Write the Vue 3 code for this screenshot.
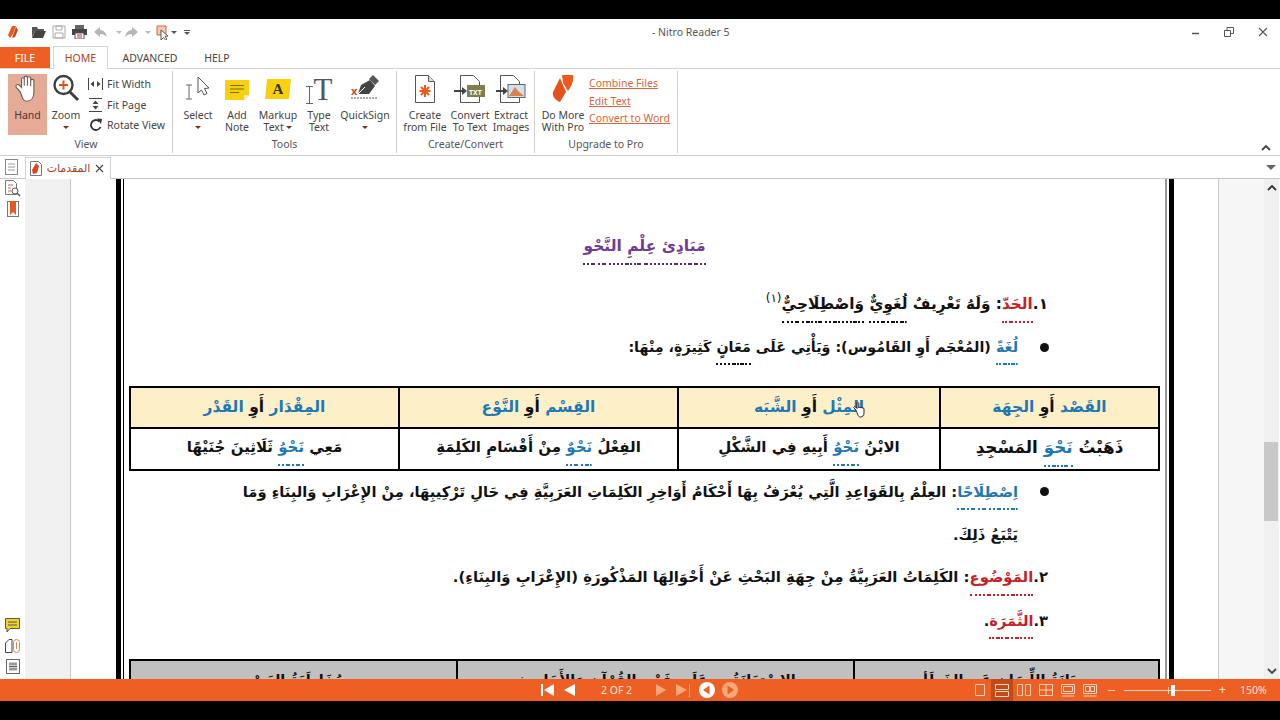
<script setup>
// splits arabic text so the harakat can get their own colour, like in the scanned pdf
const marks = /[\u064B-\u0652]+|[^\u064B-\u0652]+/g
const parts = (...runs) => {
  const out = []
  for (const r of runs) {
    const [text, cls = ''] = Array.isArray(r) ? r : [r]
    for (const t of text.match(marks)) {
      const isMark = /^[\u064B-\u0652]/.test(t)
      out.push({ t, c: cls + (isMark ? ' mk' : '') })
    }
  }
  return out
}

const title = parts(['مَبَادِئ عِلْمِ النَّحْو', 'purple u-purple'])
const line1 = parts('١.', ['الحَدّ', 'red u-red'], ': وَلَهُ تَعْرِيفٌ ', ['لُغَوِيٌّ', 'u-black'], ' ', ['وَاصْطِلَاحِيٌّ', 'u-black'])
const line2 = parts(['لُغَةً', 'blue u-blue'], ' (المُعْجَم أَوِ القَامُوس): وَيَأْتِي عَلَى ', ['مَعَانٍ', 'u-black'], ' كَثِيرَةٍ، مِنْهَا:')
const line3 = parts(['اِصْطِلَاحًا', 'blue u-blue'], ': العِلْمُ بِالقَوَاعِدِ الَّتِي يُعْرَفُ بِهَا أَحْكَامُ أَوَاخِرِ الكَلِمَاتِ العَرَبِيَّةِ فِي حَالِ تَرْكِيبِهَا، مِنْ الإِعْرَابِ وَالبِنَاءِ وَمَا')
const line4 = parts('يَتْبَعُ ذَلِكَ.')
const line5 = parts('٢.', ['المَوْضُوع', 'red u-red'], ': الكَلِمَاتُ العَرَبِيَّةُ مِنْ جِهَةِ البَحْثِ عَنْ أَحْوَالِهَا المَذْكُورَةِ (الإِعْرَابِ وَالبِنَاءِ).')
const line6 = parts('٣.', ['الثَّمَرَة', 'red u-red'], '.')

const heads = [
  parts(['القَصْد', 'blue'], ' أَوِ ', ['الجِهَة', 'blue']),
  parts(['المِثْل', 'blue'], ' أَوِ ', ['الشَّبَه', 'blue']),
  parts(['القِسْم', 'blue'], ' أَوِ ', ['النَّوْع', 'blue']),
  parts(['المِقْدَار', 'blue'], ' أَوِ ', ['القَدْر', 'blue']),
]
const cells = [
  parts('ذَهَبْتُ ', ['نَحْوَ', 'blue u-blue'], ' المَسْجِدِ'),
  parts('الابْنُ ', ['نَحْوُ', 'blue u-blue'], ' أَبِيهِ فِي الشَّكْلِ'),
  parts('الفِعْلُ ', ['نَحْوٌ', 'blue u-blue'], ' مِنْ أَقْسَامِ الكَلِمَةِ'),
  parts('مَعِي ', ['نَحْوُ', 'blue u-blue'], ' ثَلَاثِينَ جُنَيْهًا'),
]
const lower = [
  parts('صِيَانَةُ اللِّسَانِ عَنِ الخَطَأِ'),
  parts('الاسْتِعَانَةُ بِهِ عَلَى فَهْمِ القُرْآنِ وَالأَحَادِيثِ'),
  parts('مُخَاطَبَةُ العَصْرِ'),
]
</script>

<template>
  <div class="app">
    <div class="titlebar">
      <div class="qat">
        <svg class="q-logo" width="12" height="14" viewBox="0 0 12 14"><path d="M5 1 L9 1 L6 9 L3 13 L1 10 Z" fill="#e8591f"/><path d="M9 2 L11 5 L8 12 L5 13 Z" fill="#c9431a"/></svg>
        <svg class="q-open" width="16" height="14" viewBox="0 0 16 14"><path d="M1 2h5l1 2h6v2H4L1 12z" fill="#555"/><path d="M4 6h11l-3 7H1z" fill="#444"/></svg>
        <svg class="q-save" width="14" height="14" viewBox="0 0 14 14"><path d="M1 1h12v12H1z" fill="#fff" stroke="#aaa"/><path d="M4 1h6v4H4zM3 8h8v5H3z" fill="none" stroke="#aaa"/></svg>
        <svg class="q-print" width="15" height="14" viewBox="0 0 15 14"><path d="M3 0h9v4H3z" fill="#666"/><path d="M0 4h15v6H0z" fill="#444"/><path d="M3 8h9v6H3z" fill="#fff" stroke="#555"/><path d="M5 10h5M5 12h5" stroke="#c33"/></svg>
        <svg class="q-undo" width="14" height="11" viewBox="0 0 14 11"><path d="M6 0 L0 5 L6 10 V7 C9 7 11 8 13 10 C12 6 10 3 6 3Z" fill="#b5b5b5"/></svg>
        <i class="mini q-d1"></i>
        <svg class="q-redo" width="14" height="11" viewBox="0 0 14 11"><path d="M8 0 L14 5 L8 10 V7 C5 7 3 8 1 10 C2 6 4 3 8 3Z" fill="#b5b5b5"/></svg>
        <i class="mini q-d2"></i>
        <svg class="q-snap" width="13" height="15" viewBox="0 0 13 15"><path d="M1 1h9v9H1z" fill="#f3c9b5" stroke="#d2694a"/><path d="M5 5 V15 L7.5 12.5 L9.5 15 L11 14 L9 11.5 L12 11 Z" fill="#fff" stroke="#333" stroke-width=".8"/></svg>
        <i class="mini dark q-d3"></i>
        <span class="q-more"><b></b><i class="mini dark"></i></span>
      </div>
      <div class="wintitle">- Nitro Reader 5</div>
      <div class="winbtns">
        <svg width="8" height="8" viewBox="0 0 8 8"><path d="M0 5.500h7" stroke="#555" stroke-width="1.500"/></svg>
        <svg width="10" height="10" viewBox="0 0 10 10"><path d="M.5 3.500h6v6h-6zM3 3.500V.5h6.500v6H6.500" fill="none" stroke="#555"/></svg>
        <svg width="10" height="10" viewBox="0 0 10 10"><path d="M1 1l8 8M9 1l-8 8" stroke="#555" stroke-width="1.100"/></svg>
      </div>
    </div>

    <div class="tabs">
      <div class="tab file">FILE</div>
      <div class="tab home">HOME</div>
      <div class="tab adv">ADVANCED</div>
      <div class="tab help">HELP</div>
    </div>

    <div class="ribbon">
      <section class="group g-view">
        <div class="items view-items">
          <div class="rbtn hand">
            <svg width="30" height="30" viewBox="0 0 28 28"><path d="M7 17 L3 12.500 C2 10.500 4 9 6 10.500 L8 12.500 V5 C8 3 10.500 3 10.500 5 V11 V3.500 C10.500 1.500 13.500 1.500 13.500 3.500 V11 V4 C13.500 2 16.500 2 16.500 4 V11.500 V6.500 C16.500 4.500 19.500 4.500 19.500 6.500 V17 C19.500 22 17 25.500 12.500 25.500 C9.500 25.500 8.500 22 7 17Z" fill="#fff" stroke="#6a5a52" stroke-width="1"/></svg>
            <span>Hand</span>
          </div>
          <div class="rbtn zoom">
            <svg width="28" height="30" viewBox="0 0 28 30"><circle cx="11.500" cy="11" r="9" fill="#fff" stroke="#3f3f3f" stroke-width="2.400"/><path d="M18 18l8 8" stroke="#3f3f3f" stroke-width="3"/><path d="M11.500 6.500v9M7 11h9" stroke="#e0521d" stroke-width="2"/></svg>
            <span>Zoom</span>
            <i class="mini red"></i>
          </div>
          <div class="small-list">
            <div class="small">
              <svg width="15" height="12" viewBox="0 0 15 12"><path d="M.5 0v12M14.500 0v12" stroke="#444"/><path d="M6 3 L2.500 6 L6 9zM9 3 L12.500 6 L9 9z" fill="#444"/></svg>
              <span>Fit Width</span>
            </div>
            <div class="small">
              <svg width="15" height="14" viewBox="0 0 15 14"><path d="M1 .5h13M1 13.500h13" stroke="#444"/><path d="M7.500 2.500 L4.500 6h6zM7.500 11.500 L4.500 8h6z" fill="#444"/></svg>
              <span>Fit Page</span>
            </div>
            <div class="small">
              <svg width="15" height="14" viewBox="0 0 15 14"><path d="M11.500 3.500 A5 5 0 1 0 12.500 9" fill="none" stroke="#333" stroke-width="1.800"/><path d="M9 .5 L14 1 L13 6z" fill="#333"/></svg>
              <span>Rotate View</span>
            </div>
          </div>
        </div>
        <div class="gname">View</div>
      </section>

      <section class="group g-tools">
        <div class="items tools-items">
          <div class="rbtn">
            <svg width="28" height="30" viewBox="0 0 28 30"><path d="M2 11h6M5 11v14M2 25h6" stroke="#666" fill="none"/><path d="M14 3 V19 L17.500 16 L20 21 L23 19.500 L20.500 14.500 L25 14 Z" fill="#fff" stroke="#555"/></svg>
            <span>Select</span>
            <i class="mini red"></i>
          </div>
          <div class="rbtn">
            <svg width="26" height="30" viewBox="0 0 26 30"><path d="M1 6h24v15l-5 5H1z" fill="#f9d010"/><path d="M20 26v-5h5z" fill="#f5eeb0"/><path d="M6 11.500h14M6 15h14M6 18.500h9" stroke="#7a6a10" stroke-width="1.200"/></svg>
            <span>Add<br>Note</span>
          </div>
          <div class="rbtn">
            <div class="mark-icon"><b>A</b></div>
            <span class="nw">Markup<br>Text <i class="mini red inl"></i></span>
          </div>
          <div class="rbtn">
            <div class="type-icon"><svg width="7" height="18" viewBox="0 0 7 18"><path d="M0 .5h7M3.500 .5v17M0 17.500h7" stroke="#666" fill="none"/></svg><b>T</b></div>
            <span>Type<br>Text</span>
          </div>
          <div class="rbtn">
            <svg width="30" height="30" viewBox="0 0 30 30"><text x="1" y="21" class="sign-x">x</text><path d="M1 24h26" stroke="#555" stroke-dasharray="2 1"/><path d="M8 20 L11 11 L20 6 L25 12 L19 20 Z" fill="#444"/><path d="M8 20 L15 13" stroke="#fff"/><path d="M19 5 L23 1 L29 7 L25 11Z" fill="#555"/></svg>
            <span>QuickSign</span>
            <i class="mini red"></i>
          </div>
        </div>
        <div class="gname">Tools</div>
      </section>

      <section class="group g-create">
        <div class="items create-items">
          <div class="rbtn">
            <svg width="24" height="30" viewBox="0 0 24 30"><path d="M2.500 1.500h13l6 6v21h-19z" fill="#fff" stroke="#555"/><path d="M15.500 1.500v6h6" fill="#ddd" stroke="#555"/><path d="M12 11v12M6.500 17h11M8 13l8 8M16 13l-8 8" stroke="#ee5a1d" stroke-width="2"/></svg>
            <span>Create<br>from File</span>
          </div>
          <div class="rbtn">
            <svg width="32" height="30" viewBox="0 0 32 30"><path d="M6.500 1.500h13l6 6v21h-19z" fill="#fff" stroke="#555"/><path d="M0 17h9" stroke="#444" stroke-width="2"/><path d="M8 13l5 4-5 4z" fill="#444"/><rect x="13" y="11" width="18" height="12" fill="#7d7f50"/><text x="15" y="20.500" class="txt">TXT</text></svg>
            <span>Convert<br>To Text</span>
          </div>
          <div class="rbtn">
            <svg width="30" height="30" viewBox="0 0 30 30"><path d="M4.500 1.500h13l6 6v21h-19z" fill="#fff" stroke="#555"/><path d="M0 17h8" stroke="#444" stroke-width="2"/><path d="M7 13l5 4-5 4z" fill="#444"/><rect x="12" y="10.500" width="17" height="13" fill="#cfe1ea" stroke="#666"/><path d="M13 22 L19 13 L22 17 L28 22Z" fill="#d9824f"/></svg>
            <span>Extract<br>Images</span>
          </div>
        </div>
        <div class="gname">Create/Convert</div>
      </section>

      <section class="group g-up">
        <div class="items up-items">
          <div class="rbtn">
            <svg width="24" height="30" viewBox="0 0 24 30"><path d="M11 1 L22 1 C23 6 21 12 17 17 L12 9Z" fill="#ee5a1d"/><path d="M9 4 L15 18 L9 28 C4 26 1 22 2 18 Z" fill="#e6521a"/></svg>
            <span class="nw">Do More<br>With Pro</span>
          </div>
          <div class="links">
            <a>Combine Files</a>
            <a>Edit Text</a>
            <a>Convert to Word</a>
          </div>
        </div>
        <div class="gname">Upgrade to Pro</div>
      </section>

      <svg class="collapse" width="10" height="7" viewBox="0 0 10 7"><path d="M1 6l4-4 4 4" fill="none" stroke="#444" stroke-width="1.800"/></svg>
    </div>

    <div class="docbar">
      <div class="sb-gap">
        <svg width="13" height="16" viewBox="0 0 13 16"><rect x=".5" y=".5" width="12" height="15" fill="#fff" stroke="#888"/><path d="M3 5h7M3 8h7M3 11h7" stroke="#999"/></svg>
      </div>
      <div class="doctab">
        <svg width="12" height="15" viewBox="0 0 12 15"><path d="M.5.5h8l3 3v11H.5z" fill="#fff" stroke="#777"/><path d="M6 2 L9 5 L7 12 L3 13 L2 9Z" fill="#e0431d"/></svg>
        <span class="docname" dir="rtl">المقدمات</span>
        <svg width="9" height="9" viewBox="0 0 9 9"><path d="M1 1l7 7M8 1l-7 7" stroke="#444" stroke-width="1.100"/></svg>
      </div>
      <i class="tabdrop"></i>
    </div>

    <div class="work">
      <aside class="side">
        <div class="side-icons">
          <svg width="16" height="17" viewBox="0 0 16 17"><path d="M.5.5h8l3 3v11h-11z" fill="#fff" stroke="#777"/><path d="M3 5h5M3 8h3M3 11h3" stroke="#c66"/><circle cx="10" cy="11" r="3" fill="#fff" stroke="#555"/><path d="M12 13l3 3" stroke="#555" stroke-width="1.500"/></svg>
          <svg width="12" height="16" viewBox="0 0 12 16"><rect x=".5" y=".5" width="11" height="15" fill="#fff" stroke="#777"/><path d="M3 0h6v14L6 11l-3 3z" fill="#e8591f"/></svg>
        </div>
        <div class="side-icons low">
          <svg width="15" height="15" viewBox="0 0 15 15"><path d="M.5.5h14v10H5l-3 3.500v-3.500H.5z" fill="#f2d32c" stroke="#555"/><path d="M3 4h9M3 7h9" stroke="#555"/></svg>
          <svg width="15" height="14" viewBox="0 0 15 14"><path d="M.5 13.500V4L4 .5h3v13z" fill="#fff" stroke="#444"/><rect x="8.500" y=".5" width="6" height="13" rx="3" fill="#fff" stroke="#d9855e"/><path d="M11.500 3v7" stroke="#d9855e"/></svg>
          <svg width="14" height="15" viewBox="0 0 14 15"><rect x=".5" y=".5" width="13" height="14" fill="#fff" stroke="#666"/><path d="M3 3h8v9H3z" fill="#ccc"/><path d="M3 5h8M3 7.500h8M3 10h8" stroke="#666"/></svg>
        </div>
      </aside>
      <div class="panel"></div>
      <div class="margin"></div>

      <div class="frame">
        <article class="page">
          <h1 class="doc-title" dir="rtl"><span v-for="(s, i) in title" :key="i" :class="s.c">{{ s.t }}</span></h1>

          <p class="line num l1" dir="rtl"><span v-for="(s, i) in line1" :key="i" :class="s.c">{{ s.t }}</span><sup>(١)</sup></p>
          <p class="line bul l2" dir="rtl"><em></em><span class="txt-wrap"><span v-for="(s, i) in line2" :key="i" :class="s.c">{{ s.t }}</span></span></p>

          <div class="tbl upper" dir="rtl">
            <div v-for="(h, n) in heads" :key="n" class="cell head">
              <span v-for="(s, i) in h" :key="i" :class="s.c">{{ s.t }}</span>
              <svg v-if="n === 1" class="cursor" width="13" height="16" viewBox="0 0 13 16"><path d="M3 8 L1 6 C0 5 1.500 4 2.500 5 L4 6.500 V1.500 C4 .3 5.800 .3 5.800 1.500 V6 C5.800 5 7.500 5 7.500 6 C7.500 5.200 9.200 5.200 9.200 6.200 C9.200 5.700 11 5.700 11 7 V11 C11 13.500 9.500 15 7.500 15 C5 15 4.500 12 3 8Z" fill="#fff" stroke="#111" stroke-width=".9"/></svg>
            </div>
            <div v-for="(c, n) in cells" :key="n" class="cell body">
              <span v-for="(s, i) in c" :key="i" :class="s.c">{{ s.t }}</span>
            </div>
          </div>

          <p class="line bul" dir="rtl"><em></em><span class="txt-wrap"><span v-for="(s, i) in line3" :key="i" :class="s.c">{{ s.t }}</span></span></p>
          <p class="line cont" dir="rtl"><span v-for="(s, i) in line4" :key="i" :class="s.c">{{ s.t }}</span></p>
          <p class="line num l5" dir="rtl"><span v-for="(s, i) in line5" :key="i" :class="s.c">{{ s.t }}</span></p>
          <p class="line num" dir="rtl"><span v-for="(s, i) in line6" :key="i" :class="s.c">{{ s.t }}</span></p>

          <div class="tbl lower" dir="rtl">
            <div v-for="(c, n) in lower" :key="n" class="cell gray">
              <span v-for="(s, i) in c" :key="i" :class="s.c">{{ s.t }}</span>
            </div>
          </div>
        </article>
      </div>

      <div class="margin right"></div>
      <div class="panel right"></div>
      <div class="scroll">
        <svg width="10" height="7" viewBox="0 0 10 7"><path d="M1 6l4-4 4 4" fill="none" stroke="#333" stroke-width="1.800"/></svg>
        <div class="track"><div class="thumb"></div></div>
        <svg width="10" height="7" viewBox="0 0 10 7"><path d="M1 1l4 4 4-4" fill="none" stroke="#444" stroke-width="1.800"/></svg>
      </div>
    </div>

    <footer class="status">
      <div class="pager">
        <svg class="first" width="14" height="12" viewBox="0 0 14 12"><path d="M1 0v12" stroke="#fff" stroke-width="2"/><path d="M13 0v12L3 6z" fill="#fff"/></svg>
        <svg class="prev" width="11" height="12" viewBox="0 0 11 12"><path d="M11 0v12L0 6z" fill="#fff"/></svg>
        <span class="pageno">2 OF 2</span>
        <svg class="next" width="10" height="12" viewBox="0 0 10 12"><path d="M0 0v12l10-6z" fill="#f9a877"/></svg>
        <svg class="last" width="14" height="12" viewBox="0 0 14 12"><path d="M0 0v12l11-6z" fill="#f9a877"/></svg>
        <i class="bar"></i>
        <svg class="back" width="16" height="16" viewBox="0 0 16 16"><circle cx="8" cy="8" r="8" fill="#fff"/><path d="M10.500 3.500v9L4 8z" fill="#ee5f24"/></svg>
        <svg class="fwd" width="16" height="16" viewBox="0 0 16 16"><circle cx="8" cy="8" r="8" fill="#f9a877"/><path d="M5.500 3.500v9L12 8z" fill="#ee5f24"/></svg>
      </div>
      <div class="views">
        <span class="vb"><svg width="12" height="12" viewBox="0 0 12 12"><path d="M1.500.5h9v11h-9z" fill="none" stroke="#fbd3bc"/></svg></span>
        <span class="vb on"><svg width="14" height="13" viewBox="0 0 14 13"><path d="M.5.5h13v5H.5zM.5 7.500h13v5H.5z" fill="none" stroke="#fbd3bc"/></svg></span>
        <span class="vb"><svg width="14" height="12" viewBox="0 0 14 12"><path d="M.5.5h5v11h-5zM8.500.5h5v11h-5z" fill="none" stroke="#fbd3bc"/></svg></span>
        <span class="vb"><svg width="14" height="12" viewBox="0 0 14 12"><path d="M.5.5h13v11H.5zM7 .5v11M.5 6h13" fill="none" stroke="#fbd3bc"/></svg></span>
        <span class="vb"><svg width="14" height="13" viewBox="0 0 14 13"><path d="M.5.5h13v9H.5zM2.500 2.500h9v5h-9zM.5 12h13" fill="none" stroke="#fbd3bc"/></svg></span>
        <span class="vb"><svg width="14" height="13" viewBox="0 0 14 13"><path d="M.5.5h13v9H.5zM2.500 2.500h4v5h-4zM7.500 2.500h4v5h-4zM.5 12h13" fill="none" stroke="#fbd3bc"/></svg></span>
      </div>
      <div class="zoombar">
        <i class="minus"></i>
        <div class="slider"><i class="tick"></i><i class="knob"></i></div>
        <span class="plus">+</span>
        <span class="pct">150%</span>
      </div>
    </footer>
  </div>
</template>

<style scoped>
.app {
  height: 720px;
  padding: 19px 0;
  box-sizing: border-box;
  background: #000;
  display: flex;
  flex-direction: column;
  font-family: "Noto Sans", "Open Sans", sans-serif;
  color: #444;
  overflow: hidden;
}

/* title bar */
.titlebar {
  height: 26px;
  background: #fff;
  position: relative;
  flex: none;
}
.qat {
  display: flex;
  align-items: center;
  height: 26px;
  padding-left: 7px;
}
.qat > * { flex: none; }
.mini {
  display: inline-block;
  width: 0;
  height: 0;
  border: 3px solid transparent;
  border-top: 3px solid #bbb;
  border-bottom: 0;
}
.mini.dark { border-top-color: #555; }
.mini.red { border-top-color: #7a2f18; }
.mini.inl { vertical-align: 2px; }
.q-open { margin-left: 12px; }
.q-save { margin-left: 5px; }
.q-print { margin-left: 6px; }
.q-undo { margin-left: 7px; }
.q-d1 { margin-left: 8px; }
.q-redo { margin-left: 2px; }
.q-d2 { margin-left: 7px; }
.q-snap { margin-left: 5px; }
.q-d3 { margin-left: 2px; }
.q-more {
  margin-left: 7px;
  display: flex;
  flex-direction: column;
  gap: 1px;
}
.q-more b { width: 6px; height: 1px; background: #555; }
.wintitle {
  position: absolute;
  left: 652px;
  top: 5px;
  font-size: 10.500px;
  line-height: 16px;
  color: #555;
}
.winbtns {
  position: absolute;
  right: 12px;
  top: 8px;
  display: flex;
  align-items: center;
  gap: 24px;
}

/* tabs */
.tabs {
  height: 24px;
  flex: none;
  background: #fff;
  border-bottom: 1px solid #d4d4d4;
  display: flex;
  align-items: flex-end;
  font-size: 10.500px;
  box-sizing: border-box;
}
.tab { height: 21px; line-height: 22px; text-align: center; }
.file { width: 50px; background: #ee5f24; color: #fff; margin-right: 3px; }
.home {
  width: 55px;
  height: 23px;
  line-height: 23px;
  background: #fff;
  border: 1px solid #d4d4d4;
  border-bottom: 0;
  box-sizing: border-box;
  color: #a8451d;
  margin-bottom: -1px;
}
.adv { width: 84px; }
.help { width: 46px; margin-left: 2px; }

/* ribbon */
.ribbon {
  height: 86px;
  flex: none;
  background: #fff;
  border-bottom: 1px solid #d0d0d0;
  display: flex;
  position: relative;
}
.group {
  box-sizing: border-box;
  height: 82px;
  margin-top: 2px;
  border-right: 1px solid #cfcfcf;
  display: flex;
  flex-direction: column;
}
.g-view { width: 173px; }
.g-tools { width: 224px; }
.g-create { width: 138px; }
.g-up { width: 143px; }
.items { height: 66px; flex: none; display: grid; }
.gname {
  text-align: center;
  font-size: 10.500px;
  line-height: 14px;
  color: #555;
}
.rbtn {
  display: flex;
  flex-direction: column;
  align-items: center;
  font-size: 10.500px;
  line-height: 12px;
  text-align: center;
  color: #444;
  padding-top: 3px;
  box-sizing: border-box;
}
.rbtn > svg, .mark-icon, .type-icon { height: 30px; margin-bottom: 5px; flex: none; }
.rbtn .mini { margin-top: 5px; }
.rbtn .mini.inl { margin-top: 0; }
.nw { white-space: nowrap; }
.view-items { grid-template-columns: 39px 28px 1fr; padding-left: 8px; column-gap: 5px; }
.hand { background: #e6ab97; color: #4a3a32; height: 61px; margin-top: 3px; padding-top: 0; }
.small-list {
  padding: 3px 0 0 3px;
  display: flex;
  flex-direction: column;
  font-size: 10.500px;
}
.small { display: flex; align-items: center; gap: 4px; height: 20.500px; white-space: nowrap; }
.tools-items { grid-template-columns: 30px 48px 34px 48px 44px; padding-left: 10px; }
.mark-icon {
  width: 26px;
  height: 20px;
  margin: 5px 0 10px;
  background: #f9d010;
  clip-path: polygon(8% 0, 100% 0, 92% 100%, 0 100%);
  display: flex;
  align-items: center;
  justify-content: center;
  font-family: "Liberation Serif", serif;
  font-size: 15px;
  color: #333;
}
.type-icon {
  display: flex;
  align-items: flex-end;
  gap: 1px;
  font-family: "Liberation Serif", serif;
  font-size: 31px;
  line-height: 28px;
  color: #555;
}
.type-icon b { font-weight: normal; }
.sign-x { font-size: 11px; fill: #c8502a; font-weight: 700; }
.txt { font-size: 7px; font-weight: 700; fill: #fff; }
.create-items { grid-template-columns: 44px 46px 36px; padding-left: 6px; }
.up-items { grid-template-columns: 44px 1fr; padding-left: 6px; column-gap: 4px; }
.links {
  padding-top: 6px;
  display: flex;
  flex-direction: column;
  gap: 5px;
  font-size: 10.500px;
  line-height: 12.500px;
  color: #d9653a;
  white-space: nowrap;
}
.links a { text-decoration: underline; }
.collapse { position: absolute; right: 9px; top: 75px; }

/* doc tab row */
.docbar {
  height: 23px;
  flex: none;
  background: #fff;
  border-bottom: 1px solid #c6c6c6;
  box-sizing: border-box;
  display: flex;
  align-items: flex-end;
  position: relative;
}
.sb-gap {
  width: 25px;
  height: 22px;
  flex: none;
  display: flex;
  justify-content: center;
  align-items: center;
  padding-right: 2px;
  box-sizing: border-box;
}
.doctab {
  width: 86px;
  height: 22px;
  margin-bottom: -1px;
  box-sizing: border-box;
  border: 1px solid #d0d0d0;
  border-bottom: 0;
  background: #fff;
  display: flex;
  align-items: center;
  padding: 0 6px 0 4px;
  gap: 3px;
}
.docname {
  flex: 1;
  font-family: "DejaVu Sans", sans-serif;
  font-size: 11px;
  color: #a8451d;
  white-space: nowrap;
  text-align: center;
}
.tabdrop {
  position: absolute;
  right: 4px;
  top: 9px;
  border: 5px solid transparent;
  border-top: 5px solid #666;
  border-bottom: 0;
}

/* workspace */
.work {
  flex: 1;
  min-height: 0;
  display: flex;
  background: #fff;
  overflow: hidden;
}
.side {
  width: 25px;
  flex: none;
  display: flex;
  flex-direction: column;
  justify-content: space-between;
  box-sizing: border-box;
  padding: 1px 0 5px;
}
.side-icons {
  display: flex;
  flex-direction: column;
  align-items: center;
  gap: 4px;
}
.side-icons.low { gap: 6px; }
.panel {
  width: 45px;
  flex: none;
  background: #f1f1f1;
  border-right: 1px solid #c8c8c8;
}
.margin { width: 45px; flex: none; }
.frame {
  width: 1058px;
  flex: none;
  box-sizing: border-box;
  border-left: 5px solid #000;
  border-right: 5px solid #000;
  padding: 0 2px;
}
.page {
  height: 100%;
  box-sizing: border-box;
  border-left: 1px solid #000;
  border-right: 2px solid #999;
  padding: 54px 5px 0;
  overflow: hidden;
  font-family: "DejaVu Sans", sans-serif;
  font-weight: 700;
  color: #111;
  font-size: 14.700px;
}
.doc-title {
  margin: 0 0 18px;
  height: 32px;
  line-height: 27px;
  text-align: center;
  font-size: 15.500px;
  font-weight: 700;
}
.line {
  margin: 0;
  height: 43px;
  line-height: 43px;
  white-space: nowrap;
}
.l1 { font-size: 15.300px; }
.l2 { font-size: 14.300px; }
.l5 { font-size: 14.850px; }
.num { padding-right: 112px; }
.cont { padding-right: 142px; }
.bul {
  padding-right: 112px;
  display: flex;
  align-items: center;
  gap: 22px;
}
.bul em {
  width: 9px;
  height: 9px;
  border-radius: 50%;
  background: #111;
  flex: none;
  margin-right: -1px;
}
sup { font-size: 12px; line-height: 0; vertical-align: 7px; font-weight: 400; }
.mk { color: #c8323c; }
.red { color: #c81e28; }
.blue { color: #1f78b4; }
.purple { color: #6f3b96; }
.u-red, .u-blue, .u-black, .u-purple {
  padding-bottom: 8px;
  border-bottom: 2px dotted #111;
}
.u-red { border-bottom-color: #c81e28; }
.u-blue { border-bottom-color: #1f78b4; }
.u-purple { border-bottom-color: #4b2a80; }
.tbl {
  display: grid;
  border: 2px solid #000;
  box-sizing: border-box;
}
.upper {
  margin: 17px 0 -1px;
  grid-template-columns: 219px 262px 279px 1fr;
  grid-template-rows: 41px 40px;
  font-size: 15px;
}
.lower {
  margin-top: 17px;
  grid-template-columns: 305px 397px 1fr;
  height: 60px;
}
.cell {
  display: block;
  text-align: center;
  white-space: pre;
  border-left: 2px solid #000;
  position: relative;
}
.cell:nth-child(4n) { border-left: 0; }
.head {
  background: #fdf0c9;
  border-bottom: 2px solid #000;
  line-height: 38px;
  font-size: 15.500px;
}
.body { line-height: 36px; background: #fff; }
.body:nth-child(5) { font-size: 16.800px; }
.gray {
  background: #c0c0c0;
  line-height: 38px;
  font-size: 14.500px;
}
.gray:nth-child(3n) { border-left: 0; }
.cursor { position: absolute; left: 174px; top: 14px; }

.right.margin { width: 44px; }
.right.panel { width: 46px; border-right: 0; border-left: 1px solid #c8c8c8; box-sizing: border-box; background: #f6f6f6; }
.scroll {
  width: 15px;
  flex: none;
  background: #f0f0f0;
  display: flex;
  flex-direction: column;
  align-items: center;
  padding: 5px 0 4px;
  box-sizing: border-box;
}
.track { flex: 1; width: 100%; padding-top: 251px; box-sizing: border-box; }
.thumb { height: 79px; background: #c8c8c8; margin-right: 1px; }

/* status bar */
.status {
  height: 22px;
  flex: none;
  background: #ee5f24;
  color: #fde2d2;
  display: flex;
  align-items: center;
  position: relative;
}
.pager {
  display: flex;
  align-items: center;
  padding-left: 541px;
  width: 739px;
  box-sizing: border-box;
}
.pager svg { flex: none; }
.prev { margin-left: 9px; }
.pageno { width: 52px; margin-left: 26px; font-size: 10.500px; color: #fde2d2; }
.next { margin-left: 3px; }
.last { margin-left: 10px; }
.bar { width: 1px; height: 13px; background: #f9a877; margin-left: -1px; }
.back { margin-left: 9px; }
.fwd { margin-left: 7px; }
.views {
  position: absolute;
  left: 969px;
  top: 0;
  height: 22px;
  display: flex;
}
.vb {
  width: 22px;
  height: 22px;
  display: flex;
  align-items: center;
  justify-content: center;
}
.vb.on { background: #c24a18; }
.zoombar {
  position: absolute;
  left: 1108px;
  top: 0;
  height: 22px;
  display: flex;
  align-items: center;
}
.minus { width: 7px; height: 1px; background: #fbd3bc; }
.slider {
  width: 87px;
  height: 1px;
  background: #fbd3bc;
  margin-left: 9px;
  position: relative;
}
.tick { position: absolute; left: 44px; top: -3px; width: 1px; height: 7px; background: #fbd3bc; }
.knob { position: absolute; left: 47px; top: -5px; width: 4px; height: 11px; background: #fff; }
.plus { margin-left: 8px; font-size: 12px; line-height: 12px; }
.pct { margin-left: 14px; font-size: 10.500px; }
</style>

<style>
body { margin: 0; background: #000; }
</style>
